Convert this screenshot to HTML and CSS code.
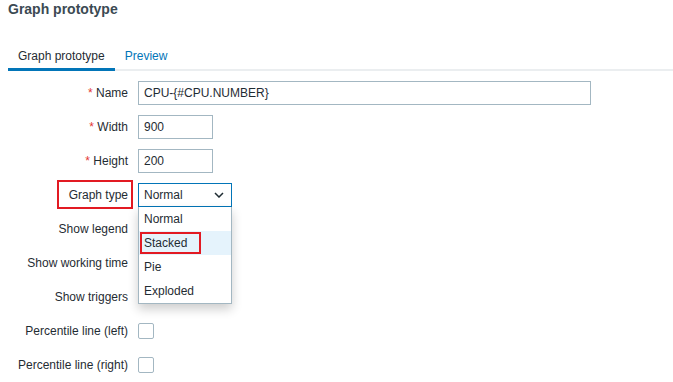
FILE: index.html
```html
<!DOCTYPE html>
<html lang="en">
<head>
  <meta charset="UTF-8" />
  <title>Graph prototype</title>
  <link rel="stylesheet" href="styles.css">
</head>
<body>
  <h1 class="page-title">Graph prototype</h1>

  <div class="tabs">
    <div class="tab active">Graph prototype</div>
    <div class="tab">Preview</div>
  </div>

  <div class="form">
    <div class="row">
      <div class="lbl"><span class="req">*</span> Name</div>
      <div class="field"><input class="text wide" type="text" value="CPU-{#CPU.NUMBER}" /></div>
    </div>
    <div class="row">
      <div class="lbl"><span class="req">*</span> Width</div>
      <div class="field"><input class="text small" type="text" value="900" /></div>
    </div>
    <div class="row">
      <div class="lbl"><span class="req">*</span> Height</div>
      <div class="field"><input class="text small" type="text" value="200" /></div>
    </div>
    <div class="row">
      <div class="lbl"><span class="marked">Graph type</span></div>
      <div class="field">
        <div class="select">
          <span>Normal</span>
          <svg class="chev" width="10" height="6" viewBox="0 0 10 6"><path d="M1 1l4 4 4-4" fill="none" stroke="#1f2c33" stroke-width="1.5"/></svg>
          <ul class="dropdown">
            <li>Normal</li>
            <li class="hover"><span class="marked-opt">Stacked</span></li>
            <li>Pie</li>
            <li>Exploded</li>
          </ul>
        </div>
      </div>
    </div>
    <div class="row">
      <div class="lbl">Show legend</div>
      <div class="field"></div>
    </div>
    <div class="row">
      <div class="lbl">Show working time</div>
      <div class="field"></div>
    </div>
    <div class="row">
      <div class="lbl">Show triggers</div>
      <div class="field"></div>
    </div>
    <div class="row">
      <div class="lbl">Percentile line (left)</div>
      <div class="field"><span class="check"></span></div>
    </div>
    <div class="row">
      <div class="lbl">Percentile line (right)</div>
      <div class="field"><span class="check"></span></div>
    </div>
  </div>
</body>
</html>
```

FILE: styles.css
```css
body {
  margin: 0;
  padding: 0 0 0 8px;
  background: #fff;
  color: #1f2c33;
  font-family: 'Liberation Sans', Arial, sans-serif;
  font-size: 12px;
}

.page-title {
  margin: 0;
  padding-top: 1px;
  height: 40px;
  font-size: 14px;
  font-weight: bold;
  color: #3b4a53;
}

.tabs {
  display: flex;
  border-bottom: 2px solid #ebeef0;
  height: 30px;
  box-sizing: border-box;
}

.tab {
  padding: 8px 10px 0;
  color: #0275b8;
}

.tab.active {
  color: #1f2c33;
  border-bottom: 3px solid #0275b8;
  margin-bottom: -2px;
}

.form {
  padding-top: 10px;
  display: flex;
  flex-direction: column;
  gap: 10px;
}

.row {
  display: flex;
  align-items: center;
  gap: 10px;
  height: 24px;
}

.lbl {
  width: 120px;
  text-align: right;
  white-space: nowrap;
}

.req {
  color: #e33734;
}

.marked {
  position: relative;
}

.marked::before {
  content: "";
  position: absolute;
  left: -12px;
  right: -5px;
  top: -8px;
  bottom: -7px;
  border: 2px solid #e21a23;
}

.field {
  display: flex;
  align-items: center;
}

.text {
  height: 24px;
  box-sizing: border-box;
  border: 1px solid #a3b7c2;
  padding: 0 5px;
  font: inherit;
  color: #1f2c33;
  outline: none;
}

.wide {
  width: 453px;
}

.small {
  width: 75px;
}

.select {
  position: relative;
  width: 94px;
  height: 24px;
  box-sizing: border-box;
  border: 1px solid #0275b8;
  padding: 0 5px;
  display: flex;
  align-items: center;
  justify-content: space-between;
}

.chev {
  margin-right: 2px;
}

.dropdown {
  position: absolute;
  left: -1px;
  top: 23px;
  width: 94px;
  box-sizing: border-box;
  margin: 0;
  padding: 0;
  list-style: none;
  background: #fff;
  border: 1px solid #a3b7c2;
  border-top: none;
  box-shadow: 0 5px 10px rgba(0, 0, 0, 0.2);
  z-index: 2;
}

.dropdown li {
  height: 24px;
  line-height: 24px;
  padding-left: 5px;
}

.dropdown li.hover {
  background: #e5f3fc;
}

.marked-opt {
  display: inline-block;
  line-height: 18px;
  padding: 0 12px 0 2px;
  margin-left: -4px;
  border: 2px solid #e21a23;
}

.check {
  width: 16px;
  height: 16px;
  box-sizing: border-box;
  border: 1px solid #a3b7c2;
  border-radius: 2px;
}
```
